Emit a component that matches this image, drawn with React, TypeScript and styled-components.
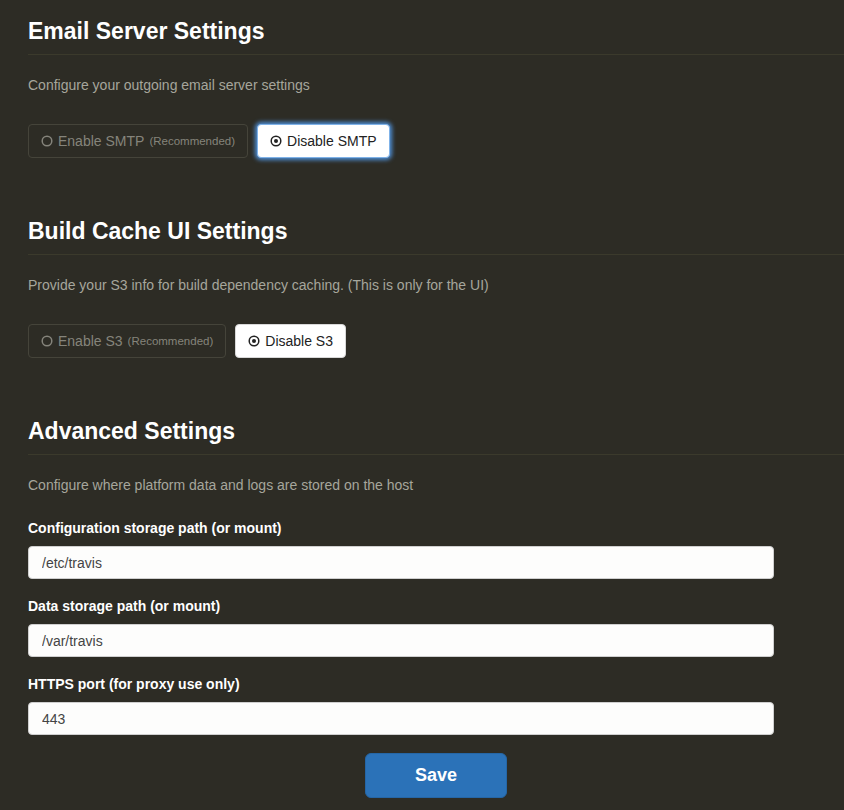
import styled, { createGlobalStyle, css } from 'styled-components';

const GlobalStyle = createGlobalStyle`
  html, body {
    margin: 0;
    padding: 0;
    background: #2d2c25;
    font-family: "Liberation Sans", Arial, Helvetica, sans-serif;
    overflow: hidden;
  }
`;

const Page = styled.div`
  width: 844px;
  height: 810px;
  padding: 18px 0 0 28px;
  box-sizing: border-box;
  display: flex;
  flex-direction: column;
`;

const Section = styled.section`
  display: flex;
  flex-direction: column;
  margin-bottom: 60px;
`;

const Heading = styled.h2`
  margin: 0;
  font-size: 23px;
  line-height: 26px;
  font-weight: bold;
  color: #ffffff;
`;

const Rule = styled.hr`
  margin: 10px 0 0 0;
  border: 0;
  height: 1px;
  background: #3b3a2c;
`;

const Description = styled.p`
  margin: 20px 0 0 0;
  font-size: 14px;
  line-height: 20px;
  color: #a6a69c;
`;

const ButtonRow = styled.div`
  display: flex;
  gap: 9px;
  margin-top: 29px;
`;

const Toggle = styled.button<{ active?: boolean; focused?: boolean }>`
  display: flex;
  align-items: center;
  gap: 5px;
  height: 34px;
  padding: 0 12px;
  box-sizing: border-box;
  border-radius: 4px;
  font-family: inherit;
  font-size: 14px;
  cursor: pointer;
  ${({ active }) =>
    active
      ? css`
          background: #ffffff;
          border: 1px solid #d8d8d8;
          color: #222222;
        `
      : css`
          background: transparent;
          border: 1px solid #45443a;
          color: #85847b;
        `}
  ${({ focused }) =>
    focused &&
    css`
      border: 1px solid #7fb2e8;
      box-shadow: 0 0 4px 2px #4f8fd6;
    `}
`;

const Note = styled.span`
  font-size: 11.5px;
`;

const Field = styled.div`
  display: flex;
  flex-direction: column;
  gap: 8px;
  margin-top: 17px;
  &:first-of-type {
    margin-top: 23px;
  }
`;

const Label = styled.label`
  font-size: 14px;
  line-height: 20px;
  font-weight: bold;
  color: #ffffff;
`;

const Input = styled.input`
  width: 746px;
  height: 33px;
  box-sizing: border-box;
  padding: 0 13px;
  border: 1px solid #cfcfcf;
  border-radius: 4px;
  background: #fdfdfc;
  font-family: inherit;
  font-size: 14px;
  color: #444444;
  outline: 0;
`;

const Actions = styled.div`
  display: flex;
  justify-content: center;
  margin-top: 18px;
`;

const SaveButton = styled.button`
  width: 142px;
  height: 45px;
  border: 1px solid #2566a6;
  border-radius: 6px;
  background: #2b72b8;
  color: #ffffff;
  font-family: inherit;
  font-size: 18px;
  font-weight: bold;
  cursor: pointer;
`;

const Radio = ({ checked }: { checked?: boolean }) => (
  <svg width="12" height="12" viewBox="0 0 12 12">
    <circle cx="6" cy="6" r="4.8" fill="none" stroke="currentColor" strokeWidth="1.5" />
    {checked && <circle cx="6" cy="6" r="2" fill="currentColor" />}
  </svg>
);

const ToggleGroup = ({ name, focused }: { name: string; focused?: boolean }) => (
  <ButtonRow>
    <Toggle>
      <Radio />
      Enable {name}
      <Note>(Recommended)</Note>
    </Toggle>
    <Toggle active focused={focused}>
      <Radio checked />
      Disable {name}
    </Toggle>
  </ButtonRow>
);

export default function App() {
  return (
    <>
      <GlobalStyle />
      <Page>
        <Section>
          <Heading>Email Server Settings</Heading>
          <Rule />
          <Description>Configure your outgoing email server settings</Description>
          <ToggleGroup name="SMTP" focused />
        </Section>

        <Section>
          <Heading>Build Cache UI Settings</Heading>
          <Rule />
          <Description>
            Provide your S3 info for build dependency caching. (This is only for the UI)
          </Description>
          <ToggleGroup name="S3" />
        </Section>

        <Section>
          <Heading>Advanced Settings</Heading>
          <Rule />
          <Description>Configure where platform data and logs are stored on the host</Description>
          <Field>
            <Label>Configuration storage path (or mount)</Label>
            <Input defaultValue="/etc/travis" />
          </Field>
          <Field>
            <Label>Data storage path (or mount)</Label>
            <Input defaultValue="/var/travis" />
          </Field>
          <Field>
            <Label>HTTPS port (for proxy use only)</Label>
            <Input defaultValue="443" />
          </Field>
          <Actions>
            <SaveButton>Save</SaveButton>
          </Actions>
        </Section>
      </Page>
    </>
  );
}
